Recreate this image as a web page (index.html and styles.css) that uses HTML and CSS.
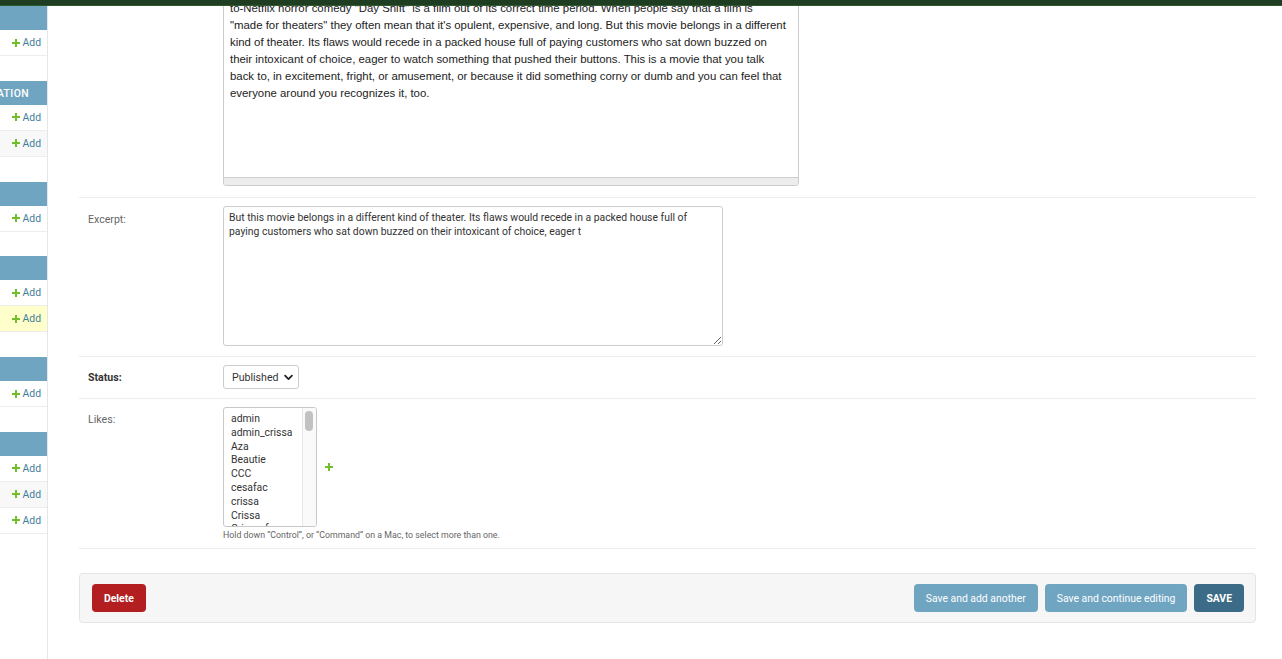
FILE: index.html
```html
<!DOCTYPE html>
<html lang="en">
<head>
<meta charset="utf-8">
<title>Change post | Django site admin</title>
<link rel="stylesheet" href="styles.css">
</head>
<body>
<header class="topbar"></header>
<div class="page">
  <nav class="sidebar" aria-label="Sidebar">
    <div class="sidebar-scroll">
      <section class="app">
        <div class="app-caption"><span>Accounts</span></div>
        <div class="app-row"><a class="model" href="#">Email addresses</a><a class="addlink" href="#"><svg class="plus" viewBox="0 0 8 8"><path d="M3 0h2v3h3v2H5v3H3V5H0V3h3z"/></svg>Add</a></div>
      </section>
      <section class="app">
        <div class="app-caption app-caption--overflow"><span>Authentication and Authorization</span></div>
        <div class="app-row"><a class="model" href="#">Groups</a><a class="addlink" href="#"><svg class="plus" viewBox="0 0 8 8"><path d="M3 0h2v3h3v2H5v3H3V5H0V3h3z"/></svg>Add</a></div>
        <div class="app-row app-row--alt"><a class="model" href="#">Users</a><a class="addlink" href="#"><svg class="plus" viewBox="0 0 8 8"><path d="M3 0h2v3h3v2H5v3H3V5H0V3h3z"/></svg>Add</a></div>
      </section>
      <section class="app">
        <div class="app-caption"><span>Django Summernote</span></div>
        <div class="app-row"><a class="model" href="#">Attachments</a><a class="addlink" href="#"><svg class="plus" viewBox="0 0 8 8"><path d="M3 0h2v3h3v2H5v3H3V5H0V3h3z"/></svg>Add</a></div>
      </section>
      <section class="app">
        <div class="app-caption"><span>Posts</span></div>
        <div class="app-row"><a class="model" href="#">Comments</a><a class="addlink" href="#"><svg class="plus" viewBox="0 0 8 8"><path d="M3 0h2v3h3v2H5v3H3V5H0V3h3z"/></svg>Add</a></div>
        <div class="app-row app-row--current"><a class="model" href="#">Posts</a><a class="addlink" href="#"><svg class="plus" viewBox="0 0 8 8"><path d="M3 0h2v3h3v2H5v3H3V5H0V3h3z"/></svg>Add</a></div>
      </section>
      <section class="app">
        <div class="app-caption"><span>Sites</span></div>
        <div class="app-row"><a class="model" href="#">Sites</a><a class="addlink" href="#"><svg class="plus" viewBox="0 0 8 8"><path d="M3 0h2v3h3v2H5v3H3V5H0V3h3z"/></svg>Add</a></div>
      </section>
      <section class="app">
        <div class="app-caption"><span>Social Accounts</span></div>
        <div class="app-row"><a class="model" href="#">Social accounts</a><a class="addlink" href="#"><svg class="plus" viewBox="0 0 8 8"><path d="M3 0h2v3h3v2H5v3H3V5H0V3h3z"/></svg>Add</a></div>
        <div class="app-row app-row--alt"><a class="model" href="#">Social application tokens</a><a class="addlink" href="#"><svg class="plus" viewBox="0 0 8 8"><path d="M3 0h2v3h3v2H5v3H3V5H0V3h3z"/></svg>Add</a></div>
        <div class="app-row"><a class="model" href="#">Social applications</a><a class="addlink" href="#"><svg class="plus" viewBox="0 0 8 8"><path d="M3 0h2v3h3v2H5v3H3V5H0V3h3z"/></svg>Add</a></div>
      </section>
    </div>
  </nav>

  <main class="content">
    <form class="change-form">
      <fieldset class="fields">
        <div class="form-row form-row--body">
          <label class="field-label field-label--required">Body:</label>
          <div class="editor">
            <div class="editor-body">to-Netflix horror comedy "Day Shift" is a film out of its correct time period. When people say that a film is<br>"made for theaters" they often mean that it's opulent, expensive, and long. But this movie belongs in a different<br>kind of theater. Its flaws would recede in a packed house full of paying customers who sat down buzzed on<br>their intoxicant of choice, eager to watch something that pushed their buttons. This is a movie that you talk<br>back to, in excitement, fright, or amusement, or because it did something corny or dumb and you can feel that<br>everyone around you recognizes it, too.</div>
            <div class="editor-foot"></div>
          </div>
        </div>

        <div class="form-row form-row--excerpt">
          <label class="field-label" for="id_excerpt">Excerpt:</label>
          <textarea class="textarea" id="id_excerpt">But this movie belongs in a different kind of theater. Its flaws would recede in a packed house full of
paying customers who sat down buzzed on their intoxicant of choice, eager t</textarea>
        </div>

        <div class="form-row form-row--status">
          <label class="field-label field-label--required">Status:</label>
          <div class="select" role="combobox" aria-expanded="false">
            <span>Published</span>
            <svg class="chevron" viewBox="0 0 10 7"><path d="M1.2 1.4L5 5.2l3.8-3.8" fill="none" stroke="#222" stroke-width="2" stroke-linecap="round" stroke-linejoin="round"/></svg>
          </div>
        </div>

        <div class="form-row form-row--likes">
          <label class="field-label">Likes:</label>
          <div class="field-box">
            <div class="related-wrapper">
              <div class="multiselect" role="listbox" aria-multiselectable="true">
                <div class="ms-options">
                  <div class="ms-option">admin</div>
                  <div class="ms-option">admin_crissa</div>
                  <div class="ms-option">Aza</div>
                  <div class="ms-option">Beautie</div>
                  <div class="ms-option">CCC</div>
                  <div class="ms-option">cesafac</div>
                  <div class="ms-option">crissa</div>
                  <div class="ms-option">Crissa</div>
                  <div class="ms-option">Crissa_fan</div>
                </div>
                <div class="ms-scrollbar"><div class="ms-thumb"></div></div>
              </div>
              <a class="related-add" href="#" title="Add another user"><svg class="plus" viewBox="0 0 8 8"><path d="M3 0h2v3h3v2H5v3H3V5H0V3h3z"/></svg></a>
            </div>
            <div class="help">Hold down “Control”, or “Command” on a Mac, to select more than one.</div>
          </div>
        </div>
      </fieldset>

      <div class="submit-row">
        <a class="deletelink" href="#">Delete</a>
        <button class="btn" type="button">Save and add another</button>
        <button class="btn" type="button">Save and continue editing</button>
        <button class="btn btn--default" type="button">SAVE</button>
      </div>
    </form>
  </main>
</div>
</body>
</html>
```

FILE: styles.css
```css
* { box-sizing: border-box; }

html, body { margin: 0; }

body {
  font-family: Roboto, "Liberation Sans", Arial, sans-serif;
  font-size: 10.4px;
  color: #333;
  background: #fff;
}

.topbar {
  position: fixed;
  top: 0;
  left: 0;
  right: 0;
  height: 6px;
  background: #1f3d21;
  border-bottom: 1px solid #2f5a31;
  z-index: 10;
}

.page {
  display: flex;
  min-height: 100vh;
}

/* Sidebar (scrolled horizontally to its right end) */
.sidebar {
  flex: none;
  width: 48px;
  padding-top: 6px;
  border-right: 1px solid #e6e6e6;
  overflow: hidden;
}

.sidebar-scroll {
  width: 260px;
  margin-left: -213px;
}

.app { margin-bottom: 24.8px; }

.app-caption {
  height: 24px;
  display: flex;
  align-items: center;
  padding: 0 8px;
  background: #70a5c2;
  color: #fff;
  font-size: 10.4px;
  font-weight: 500;
  letter-spacing: 0.4px;
  text-transform: uppercase;
  white-space: nowrap;
  overflow: hidden;
}

.app-caption--overflow {
  justify-content: flex-end;
  padding-right: 18px;
  padding-top: 1px;
}

.app-row {
  height: 26px;
  display: flex;
  align-items: center;
  justify-content: space-between;
  padding: 0 6px 0 8px;
  border-bottom: 1px solid #ededed;
}

.app-row--alt { background: #f8f8f8; }
.app-row--current { background: #ffffcc; }

.model {
  color: #447e9b;
  text-decoration: none;
}

.addlink {
  display: flex;
  align-items: center;
  gap: 3px;
  color: #447e9b;
  text-decoration: none;
  font-size: 10.4px;
}

.plus {
  width: 8px;
  height: 8px;
  fill: #70bf2b;
  flex: none;
}

/* Main content */
.content {
  flex: 1;
  min-width: 0;
  padding: 0 26px 0 31px;
}

.change-form { margin-top: -200px; }

.fields {
  margin: 0 0 24px;
  padding: 0;
  border: 0;
  min-width: 0;
}

.form-row {
  display: flex;
  align-items: flex-start;
  padding: 8px 9px 9px;
  border-bottom: 1px solid #ececec;
}

.form-row--body { padding-top: 9px; padding-bottom: 11px; }
.form-row--excerpt { padding-bottom: 10px; }
.form-row--likes { padding-bottom: 7px; }

.field-label {
  flex: none;
  width: 135px;
  padding-top: 6px;
  line-height: 14px;
  font-size: 10.6px;
  color: #666;
}

.form-row--excerpt .field-label { padding-top: 6.5px; }

.field-label--required {
  font-weight: 700;
  color: #333;
}

.form-row--status .field-label { padding-top: 5.5px; }

/* Rich text editor (scrolled) */
.editor {
  width: 576px;
  border: 1px solid #ccc;
  border-radius: 3px;
  overflow: hidden;
}

.editor-body {
  height: 367px;
  padding: 190px 6px 0;
  font-family: "Liberation Sans", Arial, sans-serif;
  font-size: 11.4px;
  line-height: 17px;
  color: #222;
  white-space: nowrap;
  overflow: hidden;
}

.editor-foot {
  height: 8px;
  border-top: 1px solid #cfcfcf;
  background: #ececec;
}

.textarea {
  display: block;
  width: 500px;
  height: 140px;
  margin: 0;
  padding: 4px 5px;
  border: 1px solid #ccc;
  border-radius: 3px;
  font-family: Roboto, sans-serif;
  font-size: 10.4px;
  line-height: 14px;
  color: #333;
  resize: vertical;
}

.select {
  width: 76px;
  height: 24px;
  display: flex;
  align-items: center;
  justify-content: space-between;
  padding: 0 5px 0 8px;
  border: 1px solid #ccc;
  border-radius: 3px;
  font-size: 10.6px;
  color: #333;
}

.chevron {
  width: 9px;
  height: 7px;
}

.field-box {
  display: flex;
  flex-direction: column;
}

.related-wrapper {
  display: flex;
  align-items: center;
  gap: 8px;
}

.related-add {
  display: flex;
}

.multiselect {
  display: flex;
  width: 94px;
  height: 120px;
  border: 1px solid #c8c8c8;
  border-radius: 3px;
  overflow: hidden;
}

.ms-options {
  flex: 1;
  padding: 4px 0 0 7px;
  font-size: 10.4px;
  line-height: 13.8px;
  color: #333;
  overflow: hidden;
  white-space: nowrap;
}

.ms-scrollbar {
  flex: none;
  width: 14px;
  padding: 3px 3px 0 2px;
  border-left: 1px solid #e6e6e6;
  background: #fafafa;
}

.ms-thumb {
  width: 8px;
  height: 20px;
  border-radius: 4px;
  background: #c2c2c2;
}

.help {
  margin-top: 2px;
  font-size: 8.8px;
  line-height: 12px;
  color: #666;
}

/* Submit row */
.submit-row {
  display: flex;
  align-items: center;
  gap: 7px;
  padding: 10px 11px 10px 12px;
  background: #f6f6f6;
  border: 1px solid #e4e4e4;
  border-radius: 4px;
}

.deletelink {
  margin-right: auto;
  height: 28px;
  display: flex;
  align-items: center;
  padding: 0 12px;
  background: #b31f21;
  color: #fff;
  font-size: 10.4px;
  font-weight: 700;
  text-decoration: none;
  border-radius: 4px;
}

.btn {
  height: 28px;
  margin: 0;
  padding: 0 12px;
  border: 0;
  border-radius: 4px;
  background: #70a5c2;
  color: #fff;
  font-family: Roboto, sans-serif;
  font-size: 10.4px;
  font-weight: 400;
}

.btn--default {
  background: #3b6b86;
  font-weight: 700;
}
```
